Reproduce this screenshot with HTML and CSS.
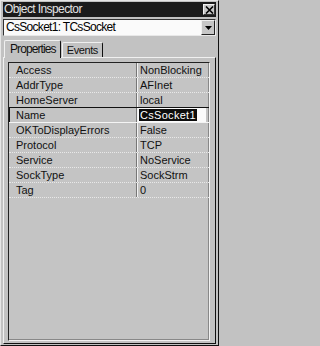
FILE: index.html
```html
<!DOCTYPE html>
<html>
<head>
<meta charset="utf-8">
<link rel="stylesheet" href="styles.css">
</head>
<body>
<div class="window">
  <div class="titlebar">
    <span class="title">Object Inspector</span>
    <span class="close"><svg width="9" height="8" viewBox="0 0 9 8"><path d="M1 0.5 L8 7.5 M8 0.5 L1 7.5" stroke="#000" stroke-width="1.6"/></svg></span>
  </div>
  <div class="combo">
    <span class="combo-text">CsSocket1: TCsSocket</span>
    <span class="drop"><svg width="7" height="4" viewBox="0 0 7 4"><path d="M0 0 H7 L3.5 4 Z" fill="#000"/></svg></span>
  </div>
  <div class="tabs">
    <div class="tab active">Properties</div>
    <div class="tab">Events</div>
  </div>
  <div class="page">
    <div class="grid">
      <div class="row"><div class="name">Access</div><div class="value">NonBlocking</div></div>
      <div class="row"><div class="name">AddrType</div><div class="value">AFInet</div></div>
      <div class="row"><div class="name">HomeServer</div><div class="value">local</div></div>
      <div class="row selected"><div class="name">Name</div><div class="value"><span class="edit"><span class="sel">CsSocket1</span></span></div></div>
      <div class="row"><div class="name">OKToDisplayErrors</div><div class="value">False</div></div>
      <div class="row"><div class="name">Protocol</div><div class="value">TCP</div></div>
      <div class="row"><div class="name">Service</div><div class="value">NoService</div></div>
      <div class="row"><div class="name">SockType</div><div class="value">SockStrm</div></div>
      <div class="row"><div class="name">Tag</div><div class="value">0</div></div>
    </div>
  </div>
</div>
</body>
</html>
```
FILE: styles.css
```css
html, body {
  margin: 0;
  padding: 0;
  background: #c2c2c2;
}
body {
  font-family: "Liberation Sans", Arial, sans-serif;
  font-size: 11px;
  color: #111;
}
.window {
  width: 219px;
  height: 346px;
  box-sizing: border-box;
  border-top: 1px solid #e6e6e6;
  border-left: 1px solid #e6e6e6;
  border-right: 1px solid #111;
  border-bottom: 1px solid #111;
  padding: 1px 2px 1px 2px;
  display: flex;
  flex-direction: column;
  background: #c2c2c2;
}
.titlebar {
  height: 15px;
  background: #1b1b1b;
  display: flex;
  align-items: center;
  justify-content: space-between;
  padding: 0 1px 0 1px;
}
.title {
  color: #e4e4e4;
  font-size: 12px;
  letter-spacing: -0.6px;
  line-height: 15px;
}
.close {
  width: 12px;
  height: 11px;
  background: #c8c8c8;
  border-top: 1px solid #f2f2f2;
  border-left: 1px solid #f2f2f2;
  border-right: 1px solid #333;
  border-bottom: 1px solid #333;
  box-sizing: border-box;
  display: flex;
  align-items: center;
  justify-content: center;
}
.combo {
  margin-top: 2px;
  height: 17px;
  box-sizing: border-box;
  background: #fafafa;
  border-top: 1px solid #333;
  border-left: 1px solid #333;
  border-right: 1px solid #e8e8e8;
  border-bottom: 1px solid #e8e8e8;
  display: flex;
  align-items: stretch;
}
.combo-text {
  flex: 1;
  padding-left: 2px;
  font-size: 12px;
  letter-spacing: -0.7px;
  line-height: 15px;
  color: #000;
}
.drop {
  width: 14px;
  background: #c6c6c6;
  border-top: 1px solid #f0f0f0;
  border-left: 1px solid #f0f0f0;
  border-right: 1px solid #222;
  border-bottom: 1px solid #222;
  box-sizing: border-box;
  display: flex;
  align-items: center;
  justify-content: center;
}
.tabs {
  margin-top: 3px;
  display: flex;
  align-items: flex-end;
  padding-left: 1px;
  height: 18px;
}
.tab {
  height: 15px;
  box-sizing: border-box;
  border-top: 1px solid #f0f0f0;
  border-left: 1px solid #f0f0f0;
  border-right: 1px solid #111;
  padding: 0 4px;
  line-height: 14px;
  font-size: 11px;
  letter-spacing: -0.4px;
  border-top-left-radius: 2px;
  border-top-right-radius: 2px;
}
.tab.active {
  height: 18px;
  padding: 0 4px 0 5px;
  line-height: 16px;
  margin-bottom: -1px;
  background: #c2c2c2;
  position: relative;
  z-index: 1;
  margin-right: 1px;
  font-size: 12px;
  letter-spacing: -0.9px;
}
.page {
  flex: 1;
  border-top: 1px solid #f0f0f0;
  border-left: 1px solid #f0f0f0;
  border-right: 1px solid #111;
  border-bottom: 1px solid #111;
  padding: 4px 5px 2px 4px;
  display: flex;
  flex-direction: column;
}
.grid {
  flex: 1;
  border-top: 1px solid #222;
  border-left: 1px solid #222;
  border-right: 1px solid #f2f2f2;
  border-bottom: 1px solid #f2f2f2;
  box-shadow: inset -1px -1px 0 #888;
  background: #c4c4c4;
}
.row {
  display: grid;
  grid-template-columns: 128px 1fr;
  height: 15px;
  box-sizing: border-box;
  border-bottom: 1px dotted #e8e8e8;
}
.name {
  padding-left: 7px;
  line-height: 14px;
  border-right: 1px solid #777;
  white-space: nowrap;
  overflow: hidden;
}
.value {
  padding-left: 2px;
  line-height: 14px;
  border-left: 1px solid #f2f2f2;
  white-space: nowrap;
  overflow: hidden;
}
.row.selected {
  border-top: 1px solid #111;
  border-bottom: 1px solid #f4f4f4;
  margin-top: -1px;
  height: 16px;
}
.row.selected .name {
  border-left: 1px solid #111;
  padding-left: 6px;
}
.row.selected .value {
  padding-left: 0;
  padding-right: 3px;
  display: flex;
}
.edit {
  flex: 1;
  background: #fafafa;
  padding-left: 1px;
}
.sel {
  background: #0c0c0c;
  color: #fff;
  padding: 0 1px;
  letter-spacing: 0.3px;
}
```
